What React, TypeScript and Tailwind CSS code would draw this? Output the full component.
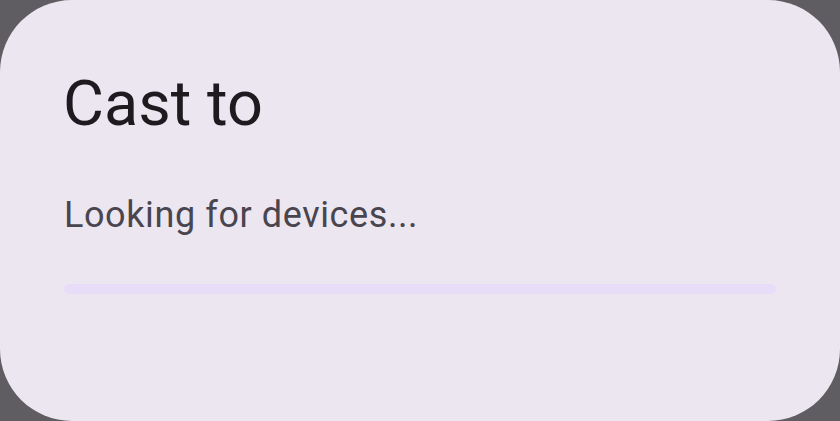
export default function App() {
  return (
    <div className="w-[840px] h-[421px] bg-[#5f5c62] overflow-hidden">
      <div
        className="w-full h-full bg-[#ece6f0] rounded-[72px] pl-[64px] pr-[64px] pt-[64px] flex flex-col"
        style={{ fontFamily: 'Roboto, "Noto Sans", sans-serif' }}
      >
        <h1 className="text-[63px] leading-[80px] text-[#1d1b20] -ml-[1px]">Cast to</h1>
        <p className="mt-[46px] text-[36px] leading-[50px] text-[#49454f] tracking-[0.6px]">
          Looking for devices...
        </p>
        <div className="mt-[44px] h-[10px] w-full rounded-full bg-[#e8ddf8]" />
      </div>
    </div>
  )
}
